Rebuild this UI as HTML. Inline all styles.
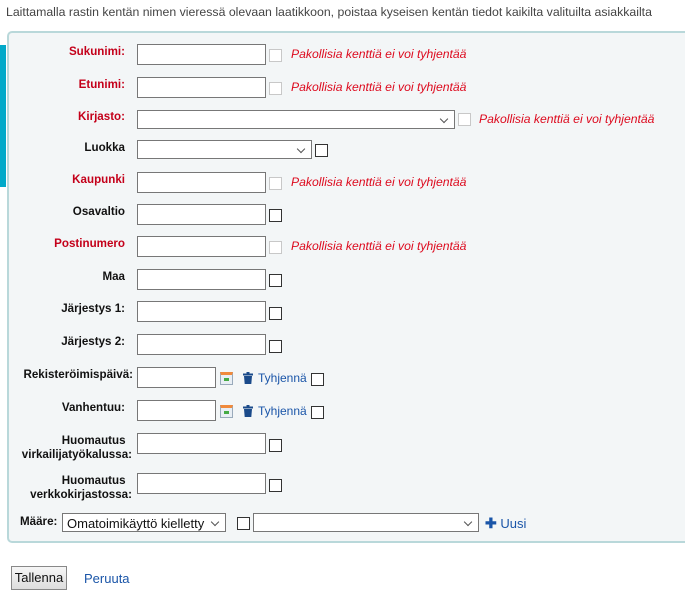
<!DOCTYPE html>
<html><head><meta charset="utf-8"><style>
body{margin:0;width:685px;height:595px;background:#fff;font-family:"Liberation Sans",Arial,sans-serif;font-size:12px;position:relative;overflow:hidden}
.a{position:absolute}
.top{left:6px;top:5px;color:#444;font-size:12.3px}
.fs{left:7px;top:31px;width:690px;height:512px;background:#f3f6f7;border:2px solid #b9d8da;border-radius:5px;box-sizing:border-box}
.strip{left:0;top:45px;width:6px;height:142px;background:#00a9c9}
.l{left:0;width:125px;text-align:right;font-weight:bold;color:#111;line-height:14px;font-size:11.6px}
.r{color:#c4001a}
.in{background:#fff;border:1px solid #777;box-sizing:border-box;height:21px}
.cb{width:13px;height:13px;border:1px solid #333;box-sizing:border-box;background:#fff}
.cbd{border-color:#c8c8c8}
.pk{color:#dd0a1e;font-style:italic;font-size:12.2px}
.sel::after{content:"";position:absolute;right:7px;top:5px;width:5px;height:5px;border-right:1px solid #555;border-bottom:1px solid #555;transform:rotate(45deg)}
.lk{color:#1a55a8}
</style></head><body>
<div class="a top">Laittamalla rastin kentän nimen vieressä olevaan laatikkoon, poistaa kyseisen kentän tiedot kaikilta valituilta asiakkailta</div>
<div class="a fs"></div>
<div class="a strip"></div>

<div class="a l r" style="top:45px">Sukunimi:</div>
<div class="a in" style="left:137px;top:44px;width:129px"></div>
<div class="a cb cbd" style="left:269px;top:49px"></div>
<div class="a pk" style="left:291px;top:47px">Pakollisia kenttiä ei voi tyhjentää</div>

<div class="a l r" style="top:78px">Etunimi:</div>
<div class="a in" style="left:137px;top:77px;width:129px"></div>
<div class="a cb cbd" style="left:269px;top:82px"></div>
<div class="a pk" style="left:291px;top:80px">Pakollisia kenttiä ei voi tyhjentää</div>

<div class="a l r" style="top:110px">Kirjasto:</div>
<div class="a in sel" style="left:137px;top:110px;width:318px;height:19px"></div>
<div class="a cb cbd" style="left:458px;top:113px"></div>
<div class="a pk" style="left:479px;top:112px">Pakollisia kenttiä ei voi tyhjentää</div>

<div class="a l" style="top:141px">Luokka</div>
<div class="a in sel" style="left:137px;top:140px;width:175px;height:19px"></div>
<div class="a cb" style="left:315px;top:144px"></div>

<div class="a l r" style="top:173px">Kaupunki</div>
<div class="a in" style="left:137px;top:172px;width:129px"></div>
<div class="a cb cbd" style="left:269px;top:177px"></div>
<div class="a pk" style="left:291px;top:175px">Pakollisia kenttiä ei voi tyhjentää</div>

<div class="a l" style="top:205px">Osavaltio</div>
<div class="a in" style="left:137px;top:204px;width:129px"></div>
<div class="a cb" style="left:269px;top:209px"></div>

<div class="a l r" style="top:237px">Postinumero</div>
<div class="a in" style="left:137px;top:236px;width:129px"></div>
<div class="a cb cbd" style="left:269px;top:241px"></div>
<div class="a pk" style="left:291px;top:239px">Pakollisia kenttiä ei voi tyhjentää</div>

<div class="a l" style="top:270px">Maa</div>
<div class="a in" style="left:137px;top:269px;width:129px"></div>
<div class="a cb" style="left:269px;top:274px"></div>

<div class="a l" style="top:302px">Järjestys 1:</div>
<div class="a in" style="left:137px;top:301px;width:129px"></div>
<div class="a cb" style="left:269px;top:307px"></div>

<div class="a l" style="top:335px">Järjestys 2:</div>
<div class="a in" style="left:137px;top:334px;width:129px"></div>
<div class="a cb" style="left:269px;top:340px"></div>

<div class="a l" style="top:368px;left:8px;width:125px">Rekisteröimispäivä:</div>
<div class="a in" style="left:137px;top:367px;width:79px"></div>
<div class="a" style="left:220px;top:372px;width:13px;height:13px;background:#e8eef4;border:1px solid #9ab;box-sizing:border-box;border-top:3px solid #f08a3c"><div class="a" style="left:3px;top:3px;width:5px;height:3px;background:#4a4"></div></div>
<svg class="a" style="left:243px;top:372px" width="10" height="12" viewBox="0 0 10 12"><rect x="0" y="1.5" width="10" height="2" fill="#1a4a8a"/><rect x="3.5" y="0" width="3" height="2" fill="#1a4a8a"/><path d="M1 4h8l-.7 8H1.7z" fill="#1a4a8a"/></svg>
<div class="a lk" style="left:258px;top:371px">Tyhjennä</div>
<div class="a cb" style="left:311px;top:373px"></div>

<div class="a l" style="top:401px">Vanhentuu:</div>
<div class="a in" style="left:137px;top:400px;width:79px"></div>
<div class="a" style="left:220px;top:405px;width:13px;height:13px;background:#e8eef4;border:1px solid #9ab;box-sizing:border-box;border-top:3px solid #f08a3c"><div class="a" style="left:3px;top:3px;width:5px;height:3px;background:#4a4"></div></div>
<svg class="a" style="left:243px;top:405px" width="10" height="12" viewBox="0 0 10 12"><rect x="0" y="1.5" width="10" height="2" fill="#1a4a8a"/><rect x="3.5" y="0" width="3" height="2" fill="#1a4a8a"/><path d="M1 4h8l-.7 8H1.7z" fill="#1a4a8a"/></svg>
<div class="a lk" style="left:258px;top:404px">Tyhjennä</div>
<div class="a cb" style="left:311px;top:406px"></div>

<div class="a l" style="top:434px;left:0;width:132px">Huomautus&nbsp;&nbsp;<br>virkailijatyökalussa:</div>
<div class="a in" style="left:137px;top:433px;width:129px"></div>
<div class="a cb" style="left:269px;top:439px"></div>

<div class="a l" style="top:474px;left:0;width:132px">Huomautus&nbsp;&nbsp;<br>verkkokirjastossa:</div>
<div class="a in" style="left:137px;top:473px;width:129px"></div>
<div class="a cb" style="left:269px;top:479px"></div>

<div class="a" style="left:20px;top:515px;font-weight:bold;color:#111;font-size:11.6px">Määre:</div>
<div class="a in sel" style="left:62px;top:513px;width:164px;height:19px;padding:2px 4px;font-size:13px;color:#111">Omatoimikäyttö kielletty</div>
<div class="a cb" style="left:237px;top:517px"></div>
<div class="a in sel" style="left:253px;top:513px;width:226px;height:19px"></div>
<div class="a lk" style="left:485px;top:515px;font-size:13px"><b style="font-size:14px">✚</b> Uusi</div>

<div class="a" style="left:11px;top:566px;width:56px;height:24px;border:1px solid #888;background:linear-gradient(#f6f6f6,#ddd);box-sizing:border-box;font-size:13px;line-height:21px;text-align:center;color:#111">Tallenna</div>
<div class="a lk" style="left:84px;top:571px;font-size:13px">Peruuta</div>
</body></html>
